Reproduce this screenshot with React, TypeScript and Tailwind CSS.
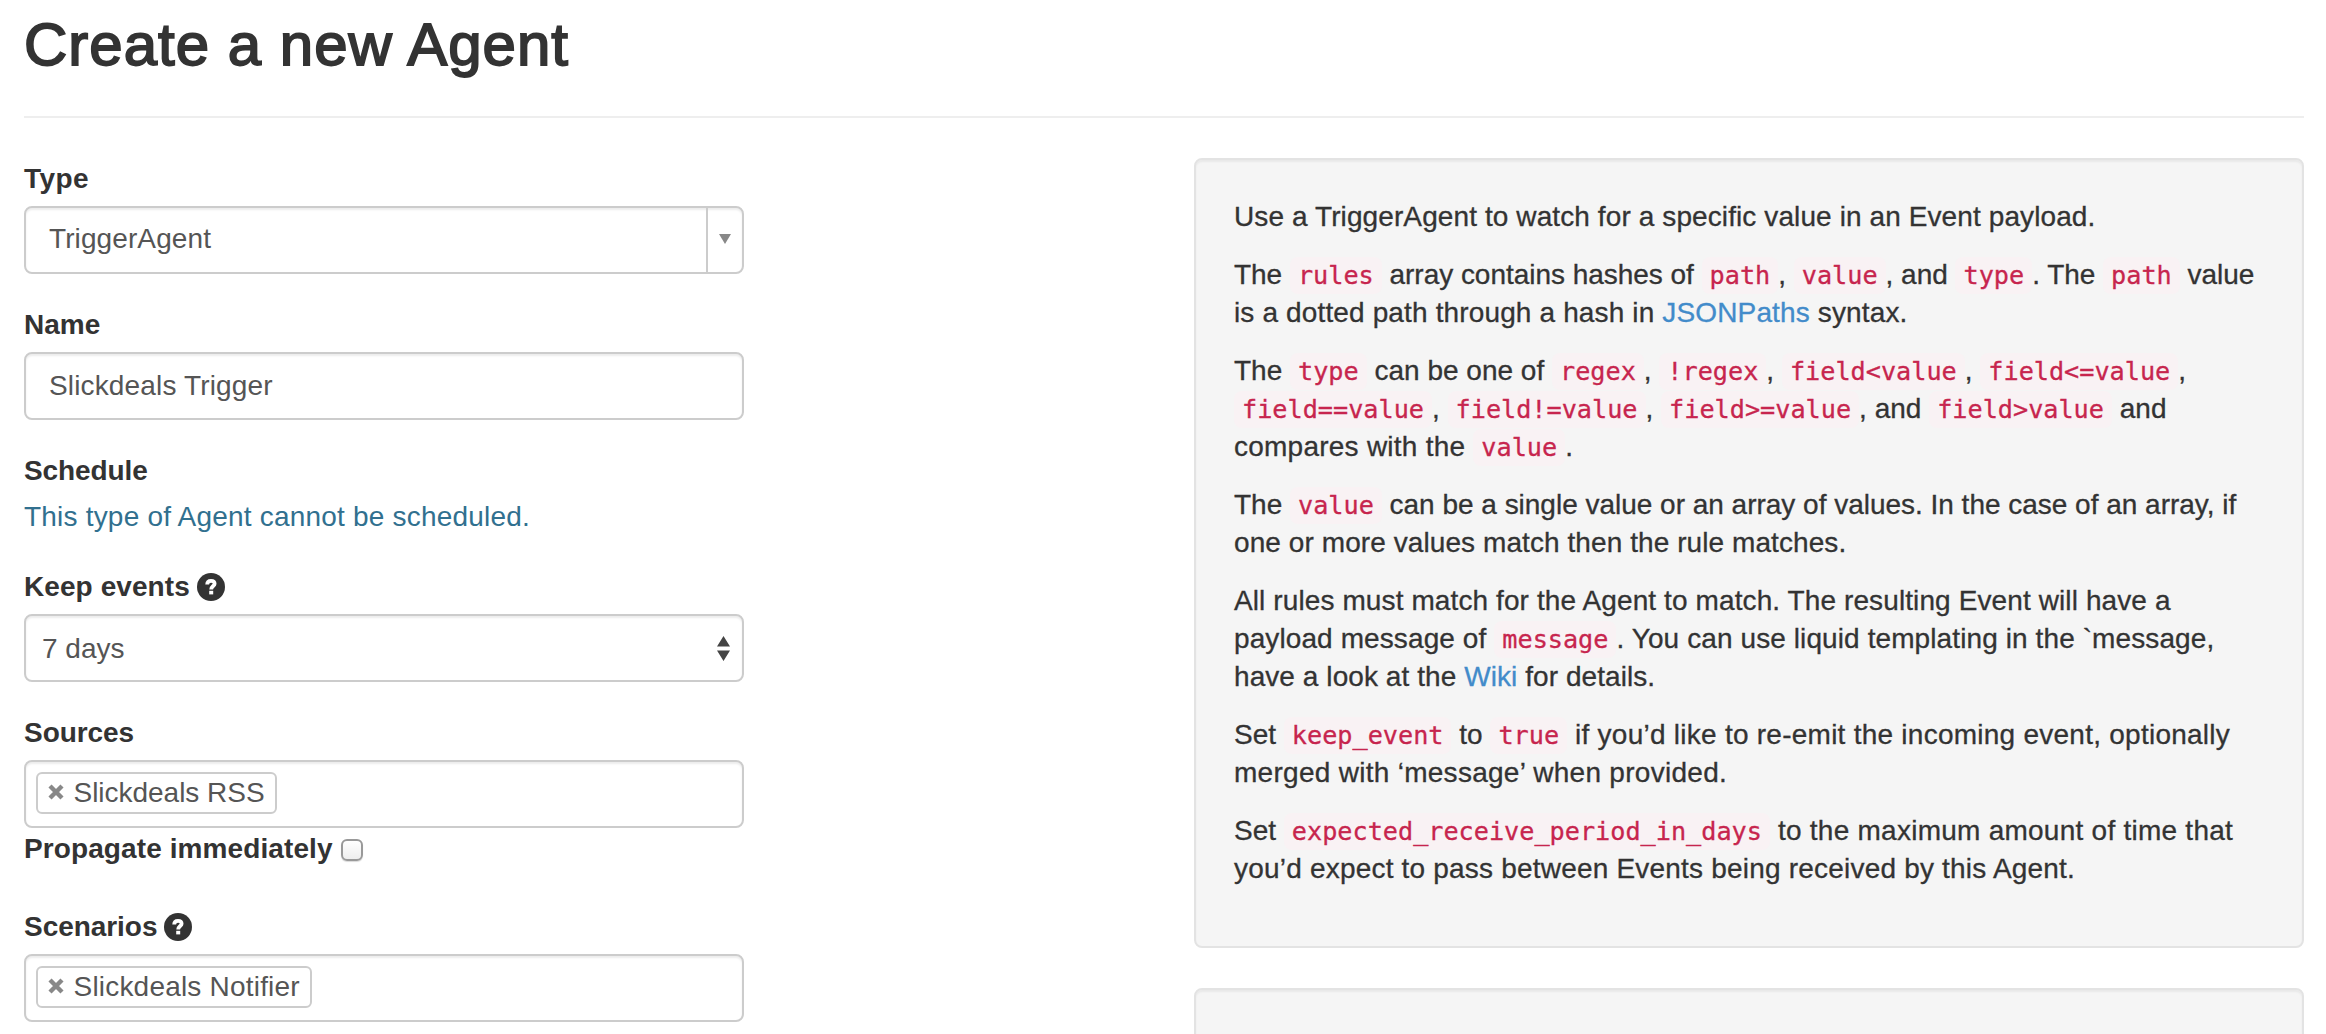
import React from "react";

const Code = ({ children }: { children: string }) => (
  <code className="rounded-[8px] bg-[#f9f2f4] px-[8px] py-[4px] font-['DejaVu_Sans_Mono',monospace] text-[25.2px] tracking-[0px] text-[#c7254e]">
    {children}
  </code>
);

const Line = ({ children, t = "" }: { children: React.ReactNode; t?: string }) => (
  <span className={`block h-[38px] whitespace-pre ${t}`}>{children}</span>
);

const Label = ({ children, t = "" }: { children: React.ReactNode; t?: string }) => (
  <div className={`mb-[9px] mt-[1px] flex h-[38px] items-center pt-[1px] font-bold leading-[38px] ${t}`}>{children}</div>
);

const field =
  "h-[68px] w-[720px] rounded-[8px] border-2 border-[#ccc] bg-white text-[#555] shadow-[inset_0_2px_2px_rgba(0,0,0,0.075)]";

const Help = () => (
  <svg viewBox="0 0 28 28" className="ml-[7px] h-[28px] w-[28px]">
    <circle cx="14" cy="14" r="14" fill="#333" />
    <path d="M10.200 11.600C10.200 8.900 11.500 7.900 14 7.900C16.500 7.900 17.600 9 17.600 10.700C17.600 13 14.200 13.200 14.200 16.600" fill="none" stroke="#fff" strokeWidth="3.8" />
    <rect x="12.200" y="17.800" width="4" height="3.600" fill="#fff" />
  </svg>
);

const Chip = ({ children, t }: { children: string; t: string }) => (
  <div className="ml-[10px] mt-[10px] flex h-[42px] w-fit items-center rounded-[6px] border-2 border-[#ccc] px-[10px]">
    <svg viewBox="0 0 16 16" className="mr-[9.5px] h-[16px] w-[16px] -translate-y-[1px]">
      <path d="M2 2L14 14M14 2L2 14" stroke="#888" strokeWidth="4.400" />
    </svg>
    <span className={t}>{children}</span>
  </div>
);

export default function App() {
  return (
    <div className="h-[1034px] w-[2326px] overflow-hidden bg-white pl-[24px] pr-[22px] font-['Liberation_Sans',Arial,sans-serif] text-[28px] leading-[38px] text-[#333]">
      <header className="h-[118px] border-b-2 border-[#eee] pt-[11px]">
        <h1 className="text-[60px] leading-[68px] tracking-[1px] [-webkit-text-stroke:1.8px_#333]">Create a new Agent</h1>
      </header>
      <div className="flex justify-between pt-[39px]">
        <form className="w-[720px] pt-px">
          <Label t="tracking-[0.4px]">Type</Label>
          <div className={`${field} flex items-center pl-[23px]`}>
            <span className="flex-1 pb-[2px] tracking-[0.1px]">TriggerAgent</span>
            <span className="flex h-full w-[36px] items-center justify-center border-l-2 border-[#ccc] pb-[3px]">
              <svg viewBox="0 0 12 10" className="h-[10px] w-[12px]"><path d="M0 0H12L6 10Z" fill="#888" /></svg>
            </span>
          </div>
          <div className="h-[30px]" />
          <Label>Name</Label>
          <div className={`${field} flex items-center pl-[23px] tracking-[0.15px]`}>Slickdeals Trigger</div>
          <div className="h-[30px]" />
          <Label t="tracking-[-0.1px]">Schedule</Label>
          <p className="tracking-[0.2px] text-[#31708f]">This type of Agent cannot be scheduled.</p>
          <div className="h-[30px]" />
          <Label t="tracking-[0.08px]">Keep events<Help /></Label>
          <div className={`${field} flex items-center justify-between pl-[16px] pr-[12px]`}>
            <span className="pt-[1px]">7 days</span>
            <svg viewBox="0 0 13 25" className="h-[25px] w-[13px]"><path d="M0 10.500L6.500 0L13 10.500ZM0 14.500L6.500 25L13 14.500Z" fill="#444" /></svg>
          </div>
          <div className="h-[30px]" />
          <Label t="tracking-[-0.05px]">Sources</Label>
          <div className={field}><Chip t="tracking-[-0.02px]">Slickdeals RSS</Chip></div>
          <div className="flex h-[48px] items-center pb-[7px] font-bold tracking-[0.1px]">
            <span>Propagate immediately</span>
            <span className="ml-[8px] mt-[3px] h-[22px] w-[22px] rounded-[6px] border-2 border-[#999] bg-gradient-to-b from-white to-[#eee] shadow-[0_1px_1px_rgba(0,0,0,0.15)]" />
          </div>
          <div className="h-[30px]" />
          <Label t="tracking-[-0.05px]">Scenarios<Help /></Label>
          <div className={field}><Chip t="tracking-[0.2px]">Slickdeals Notifier</Chip></div>
        </form>
        <aside className="w-[1110px] pt-px">
          <div className="mb-[40px] flex h-[790px] flex-col gap-[20px] rounded-[8px] border-2 border-[#e3e3e3] bg-[#f5f5f5] px-[38px] pt-[38px] shadow-[inset_0_2px_2px_rgba(0,0,0,0.05)] [-webkit-text-stroke:0.3px]">
            <p><Line t="tracking-[0.1px]">Use a TriggerAgent to watch for a specific value in an Event payload.</Line></p>
            <p>
              <Line t="tracking-[-0.03px]">The <Code>rules</Code> array contains hashes of <Code>path</Code>, <Code>value</Code>, and <Code>type</Code>. The <Code>path</Code> value</Line>
              <Line t="tracking-[0.14px]">is a dotted path through a hash in <a className="text-[#428bca]">JSONPaths</a> syntax.</Line>
            </p>
            <p>
              <Line>The <Code>type</Code> can be one of <Code>regex</Code>, <Code>!regex</Code>, <Code>{"field<value"}</Code>, <Code>{"field<=value"}</Code>,</Line>
              <Line><Code>field==value</Code>, <Code>field!=value</Code>, <Code>{"field>=value"}</Code>, and <Code>{"field>value"}</Code> and</Line>
              <Line t="tracking-[0.24px]">compares with the <Code>value</Code>.</Line>
            </p>
            <p>
              <Line t="tracking-[-0.015px]">The <Code>value</Code> can be a single value or an array of values. In the case of an array, if</Line>
              <Line t="tracking-[0.08px]">one or more values match then the rule matches.</Line>
            </p>
            <p>
              <Line t="tracking-[0.105px]">All rules must match for the Agent to match. The resulting Event will have a</Line>
              <Line t="tracking-[0.1px]">payload message of <Code>message</Code>. You can use liquid templating in the `message,</Line>
              <Line t="tracking-[0.07px]">have a look at the <a className="text-[#428bca]">Wiki</a> for details.</Line>
            </p>
            <p>
              <Line>Set <Code>keep_event</Code> to <Code>true</Code><span className="tracking-[0.25px]"> if you’d like to re-emit the incoming event, optionally</span></Line>
              <Line t="tracking-[0.28px]">merged with ‘message’ when provided.</Line>
            </p>
            <p>
              <Line>Set <Code>expected_receive_period_in_days</Code><span className="tracking-[0.25px]"> to the maximum amount of time that</span></Line>
              <Line t="tracking-[0.2px]">you’d expect to pass between Events being received by this Agent.</Line>
            </p>
          </div>
          <div className="h-[200px] rounded-[8px] border-2 border-[#e3e3e3] bg-[#f5f5f5] shadow-[inset_0_2px_2px_rgba(0,0,0,0.05)]" />
        </aside>
      </div>
    </div>
  );
}
